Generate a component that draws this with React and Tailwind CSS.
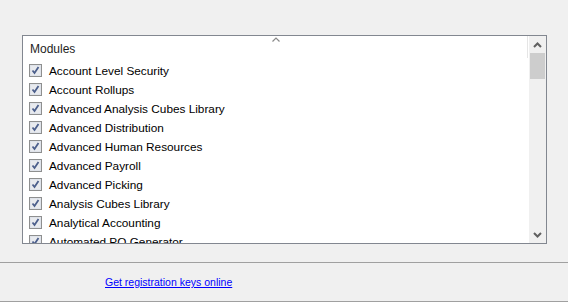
import React from "react";

const items = [
  "Account Level Security",
  "Account Rollups",
  "Advanced Analysis Cubes Library",
  "Advanced Distribution",
  "Advanced Human Resources",
  "Advanced Payroll",
  "Advanced Picking",
  "Analysis Cubes Library",
  "Analytical Accounting",
  "Automated PO Generator",
  "Bank Reconciliation",
];

function Check() {
  return (
    <div className="w-[13px] h-[13px] shrink-0 border border-[#8e8f8f] bg-[#dfe3ea] p-px">
      <div className="w-full h-full bg-[#e8eaee] flex items-center justify-center">
        <svg width="9" height="9" viewBox="0 0 9 9">
          <path d="M1.5 4.5 L3.5 7 L7.5 1" stroke="#4c5f8c" strokeWidth="1.8" fill="none" />
        </svg>
      </div>
    </div>
  );
}

export default function App() {
  return (
    <div
      className="w-[568px] h-[302px] bg-[#f0f0f0] flex flex-col overflow-hidden"
      style={{ fontFamily: '"Liberation Sans", Arial, sans-serif' }}
    >
      <div className="h-[35px] shrink-0" />
      <div className="ml-[22px] w-[525px] h-[209px] border border-[#828790] bg-white flex shrink-0">
        <div className="flex-1 flex flex-col overflow-hidden relative">
          <div className="h-[25px] shrink-0 flex items-start pl-[7px] pt-[4px] text-[12px] text-[#1e1e1e] relative">
            <span>Modules</span>
            <svg className="absolute left-[249px] top-[1px]" width="8" height="5" viewBox="0 0 8 5">
              <path d="M0.5 4.5 L4 1 L7.5 4.5" stroke="#8a8a8a" strokeWidth="1.2" fill="none" />
            </svg>
            <div className="absolute right-[1px] top-0 w-px h-[22px] bg-[#e5e5e5]" />
          </div>
          {items.map((t) => (
            <div key={t} className="h-[19px] shrink-0 flex items-center pl-[6px]">
              <Check />
              <span className="ml-[7px] text-[11.8px] text-black leading-none mt-[3px]">{t}</span>
            </div>
          ))}
        </div>
        <div className="w-[17px] shrink-0 bg-[#f0f0f0] flex flex-col">
          <div className="h-[17px] flex items-center justify-center">
            <svg width="9" height="6" viewBox="0 0 9 6">
              <path d="M1 5 L4.5 1.5 L8 5" stroke="#606060" strokeWidth="2" fill="none" />
            </svg>
          </div>
          <div className="h-[26px] bg-[#cdcdcd] mx-[1px]" />
          <div className="flex-1" />
          <div className="h-[17px] flex items-center justify-center">
            <svg width="9" height="6" viewBox="0 0 9 6">
              <path d="M1 1 L4.5 4.5 L8 1" stroke="#606060" strokeWidth="2" fill="none" />
            </svg>
          </div>
        </div>
      </div>
      <div className="h-[18px] shrink-0" />
      <div className="h-px bg-[#a0a0a0] shrink-0" />
      <div className="flex-1 flex items-center pl-[105px]">
        <a className="text-[10.5px] text-[#0000ff] underline leading-none mt-[1px]" href="#">
          Get registration keys online
        </a>
      </div>
      <div className="h-px bg-[#a0a0a0] shrink-0" />
    </div>
  );
}
